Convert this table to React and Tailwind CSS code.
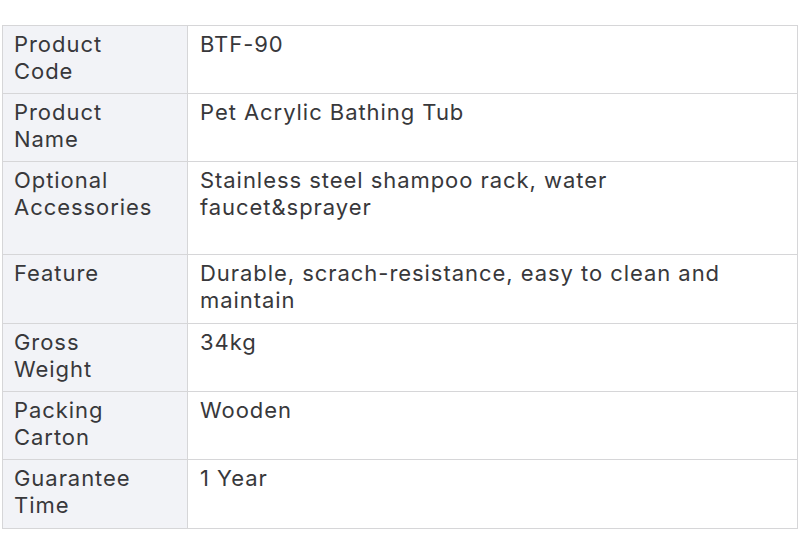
const rows = [
  { label: ["Product", "Code"], value: "BTF-90", h: "h-[68px]" },
  { label: ["Product", "Name"], value: "Pet Acrylic Bathing Tub", h: "h-[68px]" },
  { label: ["Optional", "Accessories"], value: "Stainless steel shampoo rack, water faucet&sprayer", h: "h-[93px]" },
  { label: ["Feature"], value: "Durable, scrach-resistance, easy to clean and maintain", h: "h-[69px]" },
  { label: ["Gross", "Weight"], value: "34kg", h: "h-[68px]" },
  { label: ["Packing", "Carton"], value: "Wooden", h: "h-[68px]" },
  { label: ["Guarantee", "Time"], value: "1 Year", h: "h-[69px]" },
];

const App = () => {
  return (
    <div className="h-[547px] w-[800px] bg-white pt-[25px] pl-[2px] font-['Inter',sans-serif] text-[22px] font-normal leading-[27px] tracking-[0.95px] text-[#38383b]">
      <div className="w-[796px] border-t border-l border-[#d6d6d8]">
        {rows.map((row) => (
          <div className={`flex ${row.h}`} key={row.label.join(" ")}>
            <div className="w-[185px] shrink-0 border-r border-b border-[#d6d6d8] bg-[#f2f3f7] px-[11px] pt-[5px]">
              {row.label.map((part) => (
                <span className="block" key={part}>{part}</span>
              ))}
            </div>
            <div className="flex-1 border-r border-b border-[#d6d6d8] pl-[12px] pr-[40px] pt-[5px]">{row.value}</div>
          </div>
        ))}
      </div>
    </div>
  );
};

export default App;
